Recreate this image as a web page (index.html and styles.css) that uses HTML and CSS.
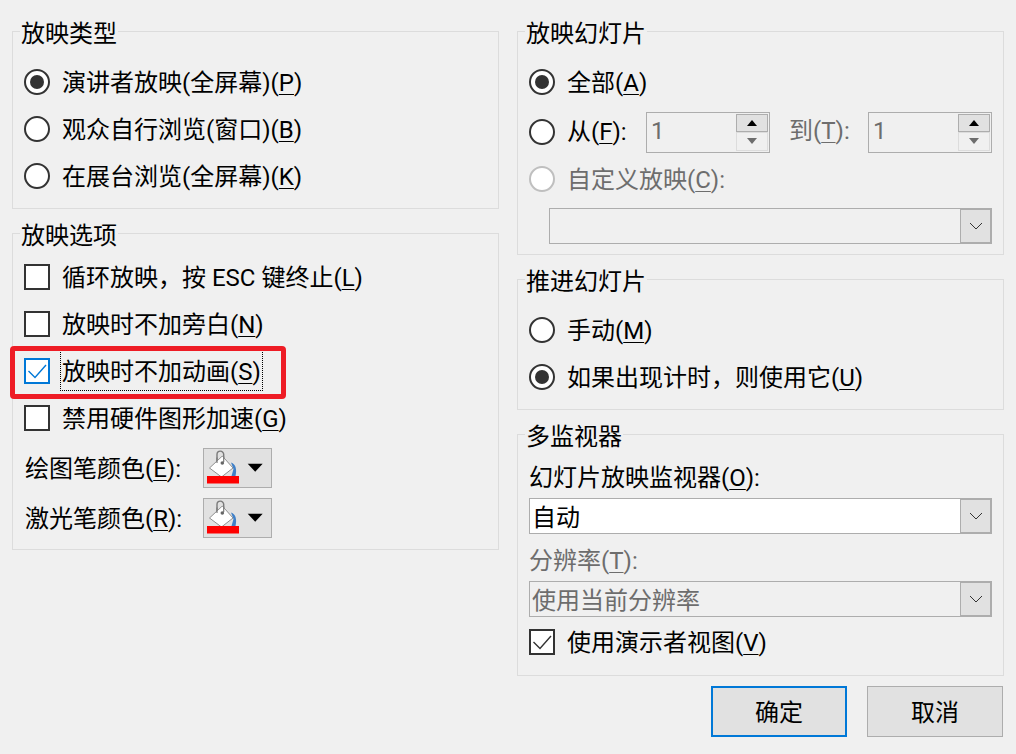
FILE: index.html
```html
<!DOCTYPE html>
<html lang="zh-CN">
<head>
    <meta charset="UTF-8">
    <title>设置放映方式</title>
    <link rel="stylesheet" href="styles.css">
</head>
<body>
    <div class="dialog">
        <div class="columns">
            <div class="column">
                <div class="group group-type">
                    <div class="group-title">放映类型</div>
                    <label class="row"><span class="radio checked"></span><span>演讲者放映(全屏幕)(<u>P</u>)</span></label>
                    <label class="row"><span class="radio"></span><span>观众自行浏览(窗口)(<u>B</u>)</span></label>
                    <label class="row"><span class="radio"></span><span>在展台浏览(全屏幕)(<u>K</u>)</span></label>
                </div>
                <div class="group group-options">
                    <div class="group-title">放映选项</div>
                    <label class="row"><span class="check"></span><span>循环放映，按 ESC 键终止(<u>L</u>)</span></label>
                    <label class="row"><span class="check"></span><span>放映时不加旁白(<u>N</u>)</span></label>
                    <label class="row row-marked">
                        <span class="check focused"><svg viewBox="0 0 22 22"><polyline points="2.5,11 9,17.5 20,5"/></svg></span>
                        <span class="focus-text">放映时不加动画(<u>S</u>)</span>
                        <span class="red-mark"></span>
                    </label>
                    <label class="row"><span class="check"></span><span>禁用硬件图形加速(<u>G</u>)</span></label>
                    <div class="color-row first-color">
                        <span class="color-label">绘图笔颜色(<u>E</u>):</span>
                        <button class="color-button">
                            <svg width="67" height="38" viewBox="1 1 67 38">
                                <path d="M14 15V6.5a3.3 3.3 0 0 1 6.7 0V15" fill="none" stroke="#7a7a7a" stroke-width="1.4"/>
                                <path d="M6.5 20 19.3 8 30 20 18.5 29Z" fill="#fff" stroke="#8f8f8f" stroke-width="1"/>
                                <path d="M14 9.5V15M20.7 8.5V14" fill="none" stroke="#7a7a7a" stroke-width="1.2"/>
                                <circle cx="19.3" cy="15" r="1.8" fill="#666"/>
                                <path d="M28 14.5C33 16 34 22 32.5 28H28.5L30.5 21Z" fill="#3f80c8"/>
                                <rect x="4" y="28" width="32" height="7.5" fill="#ff0000"/>
                                <polygon points="44.7,15.7 59.7,15.7 52.2,23.7" fill="#000"/>
                            </svg>
                        </button>
                    </div>
                    <div class="color-row">
                        <span class="color-label">激光笔颜色(<u>R</u>):</span>
                        <button class="color-button">
                            <svg width="67" height="38" viewBox="1 1 67 38">
                                <path d="M14 15V6.5a3.3 3.3 0 0 1 6.7 0V15" fill="none" stroke="#7a7a7a" stroke-width="1.4"/>
                                <path d="M6.5 20 19.3 8 30 20 18.5 29Z" fill="#fff" stroke="#8f8f8f" stroke-width="1"/>
                                <path d="M14 9.5V15M20.7 8.5V14" fill="none" stroke="#7a7a7a" stroke-width="1.2"/>
                                <circle cx="19.3" cy="15" r="1.8" fill="#666"/>
                                <path d="M28 14.5C33 16 34 22 32.5 28H28.5L30.5 21Z" fill="#3f80c8"/>
                                <rect x="4" y="28" width="32" height="7.5" fill="#ff0000"/>
                                <polygon points="44.7,15.7 59.7,15.7 52.2,23.7" fill="#000"/>
                            </svg>
                        </button>
                    </div>
                </div>
            </div>

            <div class="column">
                <div class="group group-slides">
                    <div class="group-title">放映幻灯片</div>
                    <label class="row"><span class="radio checked"></span><span>全部(<u>A</u>)</span></label>
                    <div class="row row-range">
                        <span class="radio"></span>
                        <span class="from-label">从(<u>F</u>):</span>
                        <div class="spin">
                            <span class="spin-value">1</span>
                            <div class="spin-buttons">
                                <span class="spin-up"></span>
                                <span class="spin-down"></span>
                            </div>
                        </div>
                        <span class="to-label disabled">到(<u>T</u>):</span>
                        <div class="spin">
                            <span class="spin-value">1</span>
                            <div class="spin-buttons">
                                <span class="spin-up"></span>
                                <span class="spin-down"></span>
                            </div>
                        </div>
                    </div>
                    <label class="row disabled"><span class="radio off"></span><span>自定义放映(<u>C</u>):</span></label>
                    <div class="combo combo-custom">
                        <span class="combo-text"></span>
                        <span class="combo-arrow"><svg width="14" height="8" viewBox="0 0 14 8"><polyline points="1,1 7,7 13,1"/></svg></span>
                    </div>
                </div>
                <div class="group group-advance">
                    <div class="group-title">推进幻灯片</div>
                    <label class="row"><span class="radio"></span><span>手动(<u>M</u>)</span></label>
                    <label class="row"><span class="radio checked"></span><span>如果出现计时，则使用它(<u>U</u>)</span></label>
                </div>
                <div class="group group-monitor">
                    <div class="group-title">多监视器</div>
                    <div class="field-label">幻灯片放映监视器(<u>O</u>):</div>
                    <div class="combo combo-white">
                        <span class="combo-text">自动</span>
                        <span class="combo-arrow"><svg width="14" height="8" viewBox="0 0 14 8"><polyline points="1,1 7,7 13,1"/></svg></span>
                    </div>
                    <div class="field-label field-second disabled">分辨率(<u>T</u>):</div>
                    <div class="combo">
                        <span class="combo-text disabled">使用当前分辨率</span>
                        <span class="combo-arrow"><svg width="14" height="8" viewBox="0 0 14 8"><polyline points="1,1 7,7 13,1"/></svg></span>
                    </div>
                    <label class="row row-presenter">
                        <span class="check"><svg viewBox="0 0 22 22"><polyline points="2.5,11 9,17.5 20,5"/></svg></span>
                        <span>使用演示者视图(<u>V</u>)</span>
                    </label>
                </div>
            </div>
        </div>
        <div class="actions">
            <button class="btn btn-default">确定</button>
            <button class="btn">取消</button>
        </div>
    </div>
</body>
</html>
```

FILE: styles.css
```css
html, body {
    margin: 0;
    height: 754px;
    overflow: hidden;
}
body {
    width: 1016px;
    background-color: #f0f0f0;
    color: #000;
    font-family: Roboto, "Noto Sans CJK SC", sans-serif;
    font-size: 24px;
    line-height: 32px;
}
.dialog {
    padding: 31px 13px 0 12px;
}
.columns {
    display: grid;
    grid-template-columns: 487px 487px;
    column-gap: 18px;
}
.group {
    box-sizing: border-box;
    border: 1px solid #dcdcdc;
    margin-bottom: 24px;
    padding: 0 11px;
}
.group-title {
    width: fit-content;
    margin: -15px 0 9px -4px;
    padding: 0 1px;
    background-color: #f0f0f0;
    line-height: 34px;
    height: 32px;
}
.group-type { height: 178px; }
.group-options { height: 317px; }
.group-options .group-title { margin-bottom: 2px; }
.group-slides { height: 224px; }
.group-advance { height: 131px; }
.group-monitor { height: 242px; }

.row {
    display: flex;
    align-items: center;
    height: 47px;
    gap: 12px;
    position: relative;
}
.row > span + span {
    padding-top: 2px;
}
.disabled {
    color: #6d6d6d;
}
.radio, .check {
    box-sizing: border-box;
    flex: none;
    width: 26px;
    height: 26px;
    background-color: #fff;
    border: 2px solid #333;
}
.radio {
    border-radius: 50%;
    display: flex;
    align-items: center;
    justify-content: center;
}
.radio.checked::after {
    content: "";
    width: 14px;
    height: 14px;
    border-radius: 50%;
    background-color: #333;
}
.radio.off {
    border-color: #bfbfbf;
}
.check svg {
    display: block;
    fill: none;
    stroke: #333;
    stroke-width: 1.4;
}
.check.focused {
    border-color: #0078d7;
}
.check.focused svg {
    stroke: #0078d7;
}
.row > .focus-text {
    outline: 1px dotted #000;
    outline-offset: 0;
    padding: 5px 1px 2px;
    margin-left: -1px;
}
.row > .red-mark {
    position: absolute;
    left: -14px;
    top: -1px;
    width: 276px;
    height: 53px;
    box-sizing: border-box;
    padding: 0;
    border: 5px solid #ee1c25;
    border-radius: 4px;
}

.color-row {
    display: flex;
    align-items: center;
    height: 50px;
}
.first-color {
    margin-top: 2px;
}
.color-label {
    width: 178px;
    margin-left: 1px;
    padding-top: 2px;
}
.color-button {
    box-sizing: border-box;
    width: 69px;
    height: 40px;
    padding: 0;
    border: 1px solid #adadad;
    background-color: #e1e1e1;
}
.color-button svg {
    display: block;
}

.row-range {
    height: 50px;
    margin: 2px 0 -2px;
}
.from-label {
    width: 79px;
    margin-bottom: 2px;
}
.to-label {
    width: 79px;
    margin: 0 0 2px 7px;
}
.spin {
    box-sizing: border-box;
    flex: none;
    width: 124px;
    height: 41px;
    border: 1px solid #adadad;
    display: flex;
    justify-content: space-between;
    margin-left: -10px;
}
.spin-value {
    color: #6d6d6d;
    margin-left: 4px;
    line-height: 36px;
}
.spin-buttons {
    width: 32px;
    padding: 1px 1px 1px 0;
    display: flex;
    flex-direction: column;
}
.spin-up, .spin-down {
    flex: 1;
    box-sizing: border-box;
    display: flex;
    align-items: center;
    justify-content: center;
}
.spin-up {
    background-color: #e1e1e1;
    border: 1px solid #adadad;
}
.spin-down {
    background-color: #f0f0f0;
    border: 1px solid #dcdcdc;
}
.spin-up::after {
    content: "";
    border: 5px solid transparent;
    border-top: 0;
    border-bottom: 6px solid #000;
}
.spin-down::after {
    content: "";
    border: 5px solid transparent;
    border-bottom: 0;
    border-top: 6px solid #6d6d6d;
}

.combo {
    box-sizing: border-box;
    height: 36px;
    display: flex;
    border: 1px solid #adadad;
    width: 463px;
}
.combo-custom {
    margin: 6px 0 0 20px;
    width: 443px;
}
.combo-white {
    background-color: #fff;
}
.combo-text {
    flex: 1;
    padding: 2px 0 0 2px;
    line-height: 34px;
}
.combo-arrow {
    box-sizing: border-box;
    width: 31px;
    border: 1px solid #adadad;
    background-color: #e1e1e1;
    display: flex;
    align-items: center;
    justify-content: center;
}
.combo-arrow svg {
    fill: none;
    stroke: #333;
    stroke-width: 1;
}
.field-label {
    height: 32px;
    margin-bottom: 5px;
    line-height: 34px;
}
.field-second {
    margin: 9px 0 6px;
    line-height: 36px;
}
.row-presenter {
    height: 50px;
}

.actions {
    display: flex;
    justify-content: flex-end;
    gap: 20px;
    margin-top: -14px;
}
.btn {
    box-sizing: border-box;
    width: 136px;
    height: 51px;
    border: 1px solid #adadad;
    background-color: #e1e1e1;
    color: #000;
    font: inherit;
    padding: 2px 0 0;
}
.btn-default {
    border: 2px solid #0078d7;
}
u {
    text-underline-offset: 3px;
    text-decoration-thickness: 1px;
}
```
